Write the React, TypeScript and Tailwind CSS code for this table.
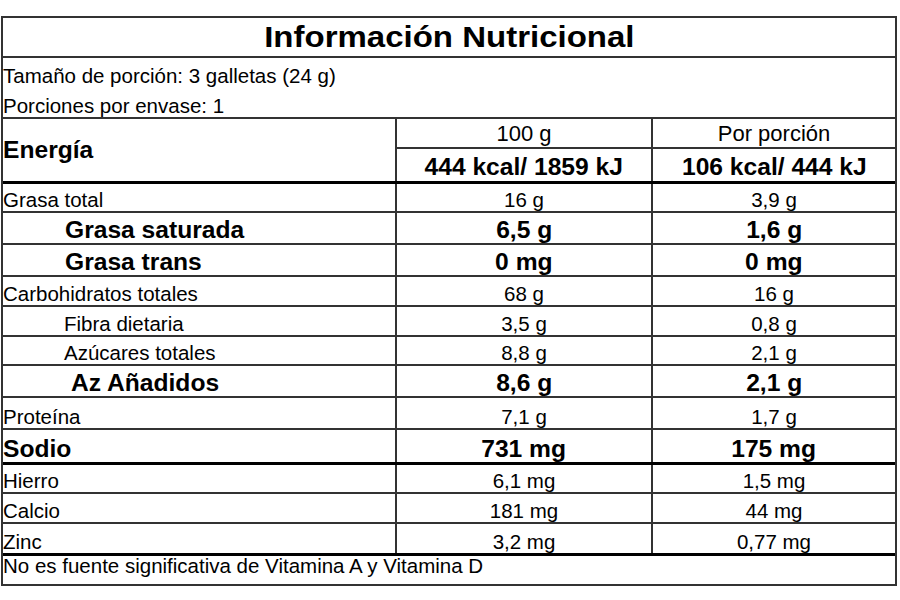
type Row = {
  label: string;
  a: string;
  b: string;
  h: string;
  bold?: boolean;
  indent?: string;
  thick?: boolean;
};

const rows: Row[] = [
  { label: "Grasa total", a: "16 g", b: "3,9 g", h: "h-[29px]" },
  { label: "Grasa saturada", a: "6,5 g", b: "1,6 g", h: "h-[32px]", bold: true, indent: "pl-[62px]" },
  { label: "Grasa trans", a: "0 mg", b: "0 mg", h: "h-[32px]", bold: true, indent: "pl-[62px]" },
  { label: "Carbohidratos totales", a: "68 g", b: "16 g", h: "h-[30px]" },
  { label: "Fibra dietaria", a: "3,5 g", b: "0,8 g", h: "h-[30px]", indent: "pl-[61px]" },
  { label: "Azúcares totales", a: "8,8 g", b: "2,1 g", h: "h-[29px]", indent: "pl-[61px]" },
  { label: "Az Añadidos", a: "8,6 g", b: "2,1 g", h: "h-[32px]", bold: true, indent: "pl-[68px]" },
  { label: "Proteína", a: "7,1 g", b: "1,7 g", h: "h-[32px]" },
  { label: "Sodio", a: "731 mg", b: "175 mg", h: "h-[35px]", bold: true, thick: true },
  { label: "Hierro", a: "6,1 mg", b: "1,5 mg", h: "h-[29px]" },
  { label: "Calcio", a: "181 mg", b: "44 mg", h: "h-[30px]" },
  { label: "Zinc", a: "3,2 mg", b: "0,77 mg", h: "h-[32px]", thick: true },
];

// bold type in the label is a bit wider than Arial, so stretch it slightly
function Txt({ bold, left, children }: { bold?: boolean; left?: boolean; children: React.ReactNode }) {
  if (!bold) return <span className="text-[20.5px]">{children}</span>;
  return (
    <span className={`text-[23px] font-bold scale-x-[1.07] ${left ? "origin-left" : "origin-center"}`}>
      {children}
    </span>
  );
}

function NutrientRow({ r }: { r: Row }) {
  const line = r.thick ? "border-b-[3px] border-black" : "border-b-2 border-[#333]";
  return (
    <div className={`grid grid-cols-[392px_256px_1fr] leading-none ${r.h} ${line}`}>
      <div className={`flex items-end pb-[1px] ${r.indent ?? ""}`}>
        <Txt bold={r.bold} left>
          {r.label}
        </Txt>
      </div>
      <div className="flex items-end justify-center border-l-2 border-[#333] pb-[1px]">
        <Txt bold={r.bold}>{r.a}</Txt>
      </div>
      <div className="flex items-end justify-center border-l-2 border-[#333] pb-[1px]">
        <Txt bold={r.bold}>{r.b}</Txt>
      </div>
    </div>
  );
}

export default function App() {
  return (
    <div className="min-h-screen bg-white pt-[16px] font-['Liberation_Sans',Arial,sans-serif] text-black">
      <div className="ml-[1px] w-[896px] border-2 border-[#333]">
        <div className="flex h-[40px] items-center justify-center border-b-2 border-[#333] leading-none">
          <span className="scale-x-[1.1] text-[30px] font-bold">Información Nutricional</span>
        </div>

        <div className="h-[61px] border-b-2 border-[#333] text-[20.5px] leading-none">
          <div className="flex h-[30px] items-end pb-[2px]">Tamaño de porción: 3 galletas (24 g)</div>
          <div className="flex h-[29px] items-end pb-[1px]">Porciones por envase: 1</div>
        </div>

        <div className="grid h-[65px] grid-cols-[392px_256px_1fr] border-b-[3px] border-black leading-none">
          <div className="flex items-center">
            <Txt bold left>
              Energía
            </Txt>
          </div>
          <div className="flex flex-col border-l-2 border-[#333]">
            <div className="flex h-[30px] items-end justify-center border-b-2 border-[#333] pb-[2px] text-[22px]">
              100 g
            </div>
            <div className="flex flex-1 items-end justify-center pb-[2px]">
              <Txt bold>444 kcal/ 1859 kJ</Txt>
            </div>
          </div>
          <div className="flex flex-col border-l-2 border-[#333]">
            <div className="flex h-[30px] items-end justify-center border-b-2 border-[#333] pb-[2px] text-[22px]">
              Por porción
            </div>
            <div className="flex flex-1 items-end justify-center pb-[2px]">
              <Txt bold>106 kcal/ 444 kJ</Txt>
            </div>
          </div>
        </div>

        {rows.map((r) => (
          <NutrientRow key={r.label} r={r} />
        ))}

        <div className="flex h-[28px] items-start text-[20.5px] leading-none">
          No es fuente significativa de Vitamina A y Vitamina D
        </div>
      </div>
    </div>
  );
}
